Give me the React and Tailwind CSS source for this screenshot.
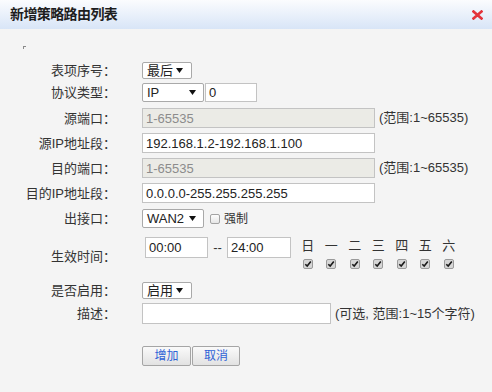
import React from "react";

const Arrow = () => (
  <svg width="7" height="5" viewBox="0 0 7 5" className="block">
    <polygon points="0,0 7,0 3.5,5" fill="#111" />
  </svg>
);

function Select({ w, h, text, pr = "pr-[7px]" }) {
  return (
    <div
      className={`flex items-center bg-white border border-[#a9a9a9] rounded-[2px] pl-[4px] ${pr} text-[13px] text-[#222] ${w} ${h}`}
    >
      <span className="leading-none">{text}</span>
      <span className="ml-auto">
        <Arrow />
      </span>
    </div>
  );
}

function Field({ w, text = "", disabled = false, h = "h-[20px]" }) {
  return (
    <div
      className={`flex items-center border border-[#c3c3c3] pl-[3px] text-[13px] leading-none ${w} ${h} ${
        disabled ? "bg-[#ebebe6] text-[#8c8c8c]" : "bg-white text-[#222]"
      }`}
    >
      {text}
    </div>
  );
}

function Label({ children }) {
  return (
    <div className="w-[116px] shrink-0 text-right text-[13px] leading-[17px] text-[#333]">
      {children}
    </div>
  );
}

function Row({ mt, h, children, label }) {
  return (
    <div className={`flex items-center ${mt} ${h}`}>
      <Label>{label}</Label>
      <div className="ml-[26px] flex items-center">{children}</div>
    </div>
  );
}

const Note = ({ children }) => (
  <span className="ml-[4px] text-[13px] text-[#333] whitespace-nowrap">{children}</span>
);

function CheckedBox() {
  return (
    <div className="w-[10px] h-[10px] border border-[#9a9a9a] bg-[#d6d6d6] rounded-[2px] flex items-center justify-center">
      <svg width="8" height="8" viewBox="0 0 8 8">
        <path d="M1.3 4.2 L3.2 6.1 L6.8 1.6" stroke="#1a1a1a" strokeWidth="1.6" fill="none" />
      </svg>
    </div>
  );
}

export default function App() {
  const days = ["日", "一", "二", "三", "四", "五", "六"];
  return (
    <div className="w-[492px] h-[392px] overflow-hidden bg-[#f4f4f4] font-['Liberation_Sans','Noto_Sans_CJK_SC',sans-serif]">
      <div className="h-[29px] flex items-center bg-linear-to-b from-[#fbfcfe] to-[#d8e5f7] pl-[10px] pr-[9px]">
        <span className="text-[14px] font-bold text-[#1e1e1e] tracking-[-0.6px]">新增策略路由列表</span>
        <svg width="11" height="10" viewBox="0 0 11 10" className="ml-auto">
          <path d="M1.5 1.5 L9.5 8.5 M9.5 1.5 L1.5 8.5" stroke="#e3343b" strokeWidth="2.6" strokeLinecap="square" />
        </svg>
      </div>
      <div className="pt-[17px]">
        <div className="ml-[23px] w-[3px] h-[3px] border-t border-l border-[#8a8a8a]" />
        <div className="mt-[13px]">
          <Row mt="" h="h-[17px]" label="表项序号：">
            <Select w="w-[50px]" h="h-[17px]" text="最后" pr="pr-[8px]" />
          </Row>
          <Row mt="mt-[4px]" h="h-[19px]" label="协议类型：">
            <Select w="w-[62px]" h="h-[19px]" text="IP" />
            <div className="ml-[1px]">
              <Field w="w-[52px]" h="h-[19px]" text="0" />
            </div>
          </Row>
          <Row mt="mt-[6px]" h="h-[20px]" label="源端口：">
            <Field w="w-[233px]" text="1-65535" disabled />
            <Note>(范围:1~65535)</Note>
          </Row>
          <Row mt="mt-[5px]" h="h-[20px]" label="源IP地址段：">
            <Field w="w-[233px]" text="192.168.1.2-192.168.1.100" />
          </Row>
          <Row mt="mt-[5px]" h="h-[20px]" label="目的端口：">
            <Field w="w-[233px]" text="1-65535" disabled />
            <Note>(范围:1~65535)</Note>
          </Row>
          <Row mt="mt-[5px]" h="h-[20px]" label="目的IP地址段：">
            <Field w="w-[233px]" text="0.0.0.0-255.255.255.255" />
          </Row>
          <Row mt="mt-[6px]" h="h-[19px]" label="出接口：">
            <Select w="w-[62px]" h="h-[19px]" text="WAN2" />
            <div className="ml-[6px] w-[10px] h-[10px] border border-[#a3a3a3] rounded-[2px] bg-linear-to-b from-[#fdfdfd] to-[#e6e6e6]" />
            <span className="ml-[4px] text-[12px] text-[#333]">强制</span>
          </Row>
          <div className="mt-[9px] h-[38px] flex items-center">
            <Label>生效时间：</Label>
            <div className="ml-[26px] self-start flex items-start">
              <div className="ml-[3px]">
                <Field w="w-[63px]" h="h-[21px]" text="00:00" />
              </div>
              <div className="w-[19px] h-[21px] flex items-center justify-center text-[13px] text-[#333]">--</div>
              <Field w="w-[64px]" h="h-[21px]" text="24:00" />
              <div className="ml-[5px] grid grid-cols-[repeat(7,23.5px)]">
                {days.map((d) => (
                  <div key={d} className="flex flex-col items-center">
                    <span className="text-[13px] leading-[17px] text-[#333]">{d}</span>
                    <div className="mt-[5px]">
                      <CheckedBox />
                    </div>
                  </div>
                ))}
              </div>
            </div>
          </div>
          <Row mt="mt-[7px]" h="h-[17px]" label="是否启用：">
            <Select w="w-[50px]" h="h-[17px]" text="启用" pr="pr-[8px]" />
          </Row>
          <Row mt="mt-[4px]" h="h-[21px]" label="描述：">
            <Field w="w-[189px]" h="h-[21px]" />
            <Note>(可选, 范围:1~15个字符)</Note>
          </Row>
          <div className="mt-[22px] ml-[142px] flex gap-[1px]">
            <button className="w-[49px] h-[20px] border border-[#a5a5a5] rounded-[2px] bg-linear-to-b from-[#fafafa] to-[#e2e2e2] text-[12px] text-[#2f63d6] leading-none">
              增加
            </button>
            <button className="w-[48px] h-[20px] border border-[#a5a5a5] rounded-[2px] bg-linear-to-b from-[#fafafa] to-[#e2e2e2] text-[12px] text-[#2f63d6] leading-none">
              取消
            </button>
          </div>
        </div>
      </div>
    </div>
  );
}
